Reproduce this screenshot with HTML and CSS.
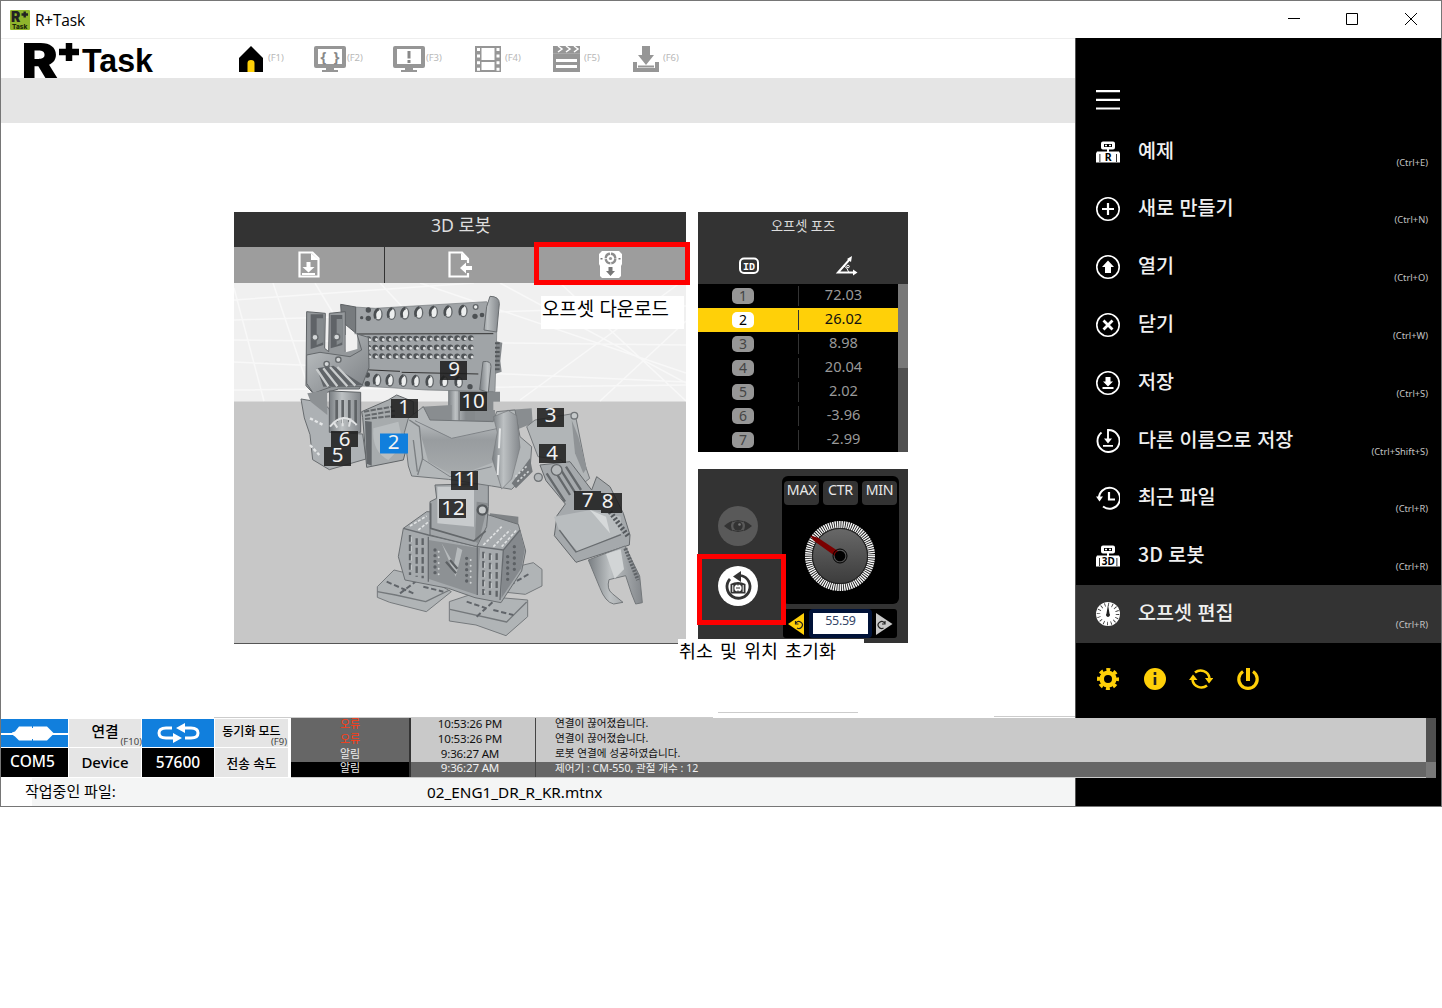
FILE: index.html
```html
<!DOCTYPE html>
<html lang="ko">
<head>
<meta charset="utf-8">
<title>R+Task</title>
<link rel="stylesheet" href="styles.css">
</head>
<body>
<div class="window">
  <header class="titlebar">
    <svg class="app-icon" viewBox="0 0 20 20"><rect width="20" height="20" rx="1" fill="#8fb52c"/><text x="1" y="11.500" font-size="14" font-weight="900" fill="#222">R</text><path d="M11.500 4.500h6.500M14.700 1.500v6" stroke="#222" stroke-width="2.400"/><text x="2" y="18.500" font-size="6.500" font-weight="800" fill="#1d2a08">Task</text></svg>
    <span class="title">R+Task</span>
    <svg class="controls" viewBox="0 0 130 14"><path d="M0 5.500h12" /><path d="M58.500 .5h11v11h-11z"/><path d="M117 0l12 12M129 0l-12 12"/></svg>
  </header>

  <div class="body">
    <main class="main">
      <nav class="toolbar">
        <svg class="logo" viewBox="0 0 130 40"><text x="-3" y="39.500" font-size="48" font-weight="900" textLength="37" lengthAdjust="spacingAndGlyphs">R</text><path d="M35 14h20M45 5v18" stroke="#000" stroke-width="6.500"/><text class="logo-word" x="58" y="33.500" textLength="71" lengthAdjust="spacingAndGlyphs">Task</text></svg>
        <div class="tool"><svg viewBox="0 0 34 28"><path fill="#000" d="M5 27V13L17 1l12 12v14z"/><path fill="#ffd008" d="M13.500 27V18q0-3 3.500-3t3.500 3v9z"/></svg><span>(F1)</span></div>
        <div class="tool"><svg viewBox="-1 0 34 28"><path fill="#969696" fill-rule="evenodd" d="M2 1h28q2 0 2 2v18q0 2-2 2H20v2h4v2H8v-2h4v-2H2q-2 0-2-2V3q0-2 2-2zM4 4v15h24V4z"/><text class="glyph" x="16" y="17" font-size="15" textLength="19">{ }</text></svg><span>(F2)</span></div>
        <div class="tool"><svg viewBox="-1 0 34 28"><path fill="#969696" fill-rule="evenodd" d="M2 1h28q2 0 2 2v18q0 2-2 2H20v2h4v2H8v-2h4v-2H2q-2 0-2-2V3q0-2 2-2zM4 4v15h24V4z"/><path d="M16 6v7.500M16 15v3" stroke="#888" stroke-width="3"/></svg><span>(F3)</span></div>
        <div class="tool"><svg viewBox="0 0 34 28"><path fill="#969696" d="M4 1h26v26H4z"/><path fill="#fff" d="M10.500 3h13v12h-13zM10.500 17h13v8h-13z"/><path d="M7.500 3v23M27 3v23" stroke="#fff" stroke-width="3" stroke-dasharray="3 3.600"/></svg><span>(F4)</span></div>
        <div class="tool"><svg viewBox="0 0 34 28"><path fill="#969696" d="M3 1h27v26H3z"/><path d="M8 1l4 3-4 3M16 1l4 3-4 3M24 1l4 3-4 3" fill="none" stroke="#fff" stroke-width="1.500"/><path d="M3 8.500h27" stroke="#b4b4b4" stroke-width=".6"/><path d="M6 15.500h21M6 21.500h21" stroke="#fff" stroke-width="3"/></svg><span>(F5)</span></div>
        <div class="tool"><svg viewBox="0 0 34 28"><path fill="#969696" d="M13 1h8v9h4l-8 10-8-10h4z"/><path fill="none" stroke="#969696" stroke-width="4" d="M6 17v8h22v-8"/><path d="M9 21.500h16" stroke="#969696" stroke-width="2"/></svg><span>(F6)</span></div>
      </nav>
      <div class="band"></div>

      <div class="workspace">
        <section class="robot-panel">
          <h2 class="panel-title">3D 로봇</h2>
          <div class="tabs">
            <div class="tab"><svg viewBox="0 0 24 28"><path d="M2.500 1.500h13l6 6v18h-19z" fill="none" stroke="#fff" stroke-width="2.200"/><path fill="#fff" d="M9.500 11h4v5h4l-6 5.500-6-5.500h4zM5 22h13v2H5zM14 2v7h8z"/></svg></div>
            <div class="tab"><svg viewBox="0 0 24 28"><path d="M20 12V8l-6-6.500H1.500v24H20V22" fill="none" stroke="#fff" stroke-width="2.200"/><path fill="#fff" d="M13 2v7h8zM12 17l6-5.500V15h7v4h-7v3.500z"/></svg></div>
            <div class="tab"><svg viewBox="0 0 24 28"><path fill="#fff" d="M3 0h17l3 3v10l-1 2v10l-2 2H3l-2-2V15l-1-2V3z"/><circle cx="11.500" cy="7.500" r="4.800" fill="none" stroke="#8d8d8d" stroke-width="2.400" stroke-dasharray="6.500 1"/><circle cx="11.500" cy="7.500" r="1.600" fill="#999"/><path fill="#777" d="M9.500 16h4v4H16l-4.500 5L7 20h2.500zM1.500 7h2v1.500h-2zM19.500 7h2v1.500h-2z"/></svg></div>
          </div>
          <svg class="scene" viewBox="234 283 452 360">
            <defs>
              <linearGradient id="metal" x1="0" y1="0" x2="1" y2="1"><stop offset="0" stop-color="#c0c4c6"/><stop offset=".5" stop-color="#9da1a4"/><stop offset="1" stop-color="#7d8185"/></linearGradient>
              <linearGradient id="chest" x1="0" y1="0" x2="0" y2="1"><stop offset="0" stop-color="#bcc0c2"/><stop offset=".35" stop-color="#989c9f"/><stop offset="1" stop-color="#a8acae"/></linearGradient>
              <linearGradient id="side" x1="0" y1="0" x2="1" y2="0"><stop offset="0" stop-color="#797e82"/><stop offset=".4" stop-color="#bdc1c3"/><stop offset="1" stop-color="#84888c"/></linearGradient>
            </defs>
            <path fill="#f0f0f0" d="M234 283h452v119H234z"/>
            <path fill="#c7c7c7" d="M234 401.500h452V643H234z"/>
            <path d="M273 283l40 118M234 288l30 113M315 283l18 30M234 300l240-17M234 320l452-14M234 340l452 5M234 362l452 20M234 390l452-5M420 283l266 90M500 283l186 100M560 283l126 118M380 283l110 118M520 400l160-117M600 401l86-80" stroke="#f8f8f8" stroke-width="1.500" fill="none"/>

            <g transform="translate(290 285) scale(.33333)" stroke-linejoin="round">
              <path fill="#85898c" d="M605 165l32 8-6 55 4 32-30 10zM590 320h40v30h-40zM475 310h135v100H440l10-30h25z"/>
              <path fill="url(#side)" d="M475 315h30v95h-30zM510 320h18v85h-18z"/>
              <path fill="#a0a4a7" stroke="#74787b" stroke-width="2" d="M195 66l60 4 335-20 30 42v58l-5 170-205-5-195-12-20-60V150z"/>
              <path fill="#777b7e" stroke="#5d6164" stroke-width="3" d="M152 58l45 8v78l-42-35z"/>
              <path fill="url(#side)" stroke="#686c6f" stroke-width="3" d="M600 34q28 0 28 22l-8 85-38-6 8-70zM579 230q24-4 24 14l-8 78-26-8z"/>
              <path d="M205 147l405-1M220 254l110 5M335 262l230 5" stroke="#333" stroke-width="3"/>
              <g fill="#eceeee" stroke="#63676a" stroke-width="4">
                <ellipse cx="265" cy="88" rx="11" ry="17"/><ellipse cx="305" cy="86" rx="11" ry="17"/><ellipse cx="345" cy="85" rx="11" ry="17"/><ellipse cx="387" cy="83" rx="11" ry="17"/><ellipse cx="431" cy="81" rx="11" ry="17"/><ellipse cx="475" cy="80" rx="11" ry="17"/><ellipse cx="520" cy="78" rx="11" ry="17"/><circle cx="557" cy="66" r="7"/>
                <ellipse cx="262" cy="285" rx="10" ry="17"/><ellipse cx="300" cy="286" rx="10" ry="17"/><ellipse cx="340" cy="287" rx="10" ry="17"/><ellipse cx="378" cy="288" rx="10" ry="17"/><ellipse cx="420" cy="289" rx="10" ry="17"/><ellipse cx="463" cy="290" rx="10" ry="15"/><ellipse cx="507" cy="292" rx="10" ry="15"/>
              </g>
              <path d="M256 100q-6-20 10-28M296 98q-6-20 10-28M336 97q-6-20 10-28M378 95q-6-20 10-28M422 93q-6-20 10-28M466 92q-6-20 10-28M511 90q-6-20 10-28M254 297q-6-20 8-28M292 298q-6-20 8-28M332 299q-6-20 8-28M370 300q-6-20 8-28M412 301q-6-20 8-28M455 302q-6-20 8-28M499 302q-6-20 8-28" stroke="#4a4e51" stroke-width="8" fill="none"/>
              <g fill="#4d5154"><circle cx="235" cy="75" r="8"/><circle cx="235" cy="100" r="8"/><circle cx="215" cy="98" r="5"/><circle cx="555" cy="94" r="8"/><circle cx="576" cy="90" r="7"/><circle cx="232" cy="270" r="8"/><circle cx="232" cy="296" r="8"/><circle cx="540" cy="305" r="8"/></g>
              <path d="M235 162l320-3M235 188l320-1M235 213l320 1" stroke="#505457" stroke-width="17" stroke-linecap="round" stroke-dasharray="0 20.500"/>
              <path d="M239 164l320-3M239 190l320-1M239 215l320 1" stroke="#dddfe0" stroke-width="9" stroke-linecap="round" stroke-dasharray="0 20.500"/>
              <path d="M622 172v90" stroke="#55595c" stroke-width="14" stroke-dasharray="6 7"/>
              <!-- raised claw arm -->
              <path fill="#94989b" stroke="#5e6265" stroke-width="3" d="M50 80l56 5-2 105 12 10 2-115 48-5v120l35-55 22 10 13 95-28 62-62 0-70 20-28-30z"/>
              <path fill="#5f6367" d="M62 88h38v92l-38 12zM122 90h35v90l-35 10z"/>
              <path fill="#858a8d" d="M80 100h20v72l-20 8zM140 102h17v70l-17 8z"/>
              <path fill="#f0f0f0" d="M167 150l35-3v45l-35 10z"/>
              <path fill="url(#metal)" stroke="#63676a" stroke-width="3" d="M50 210l40-8 90 13 35-20-14-48 34 10 2 90-22 58h-90l-55 20-20-30z"/>
              <path fill="#606468" d="M80 250l50-8 90 58-120 5z"/>
              <path d="M80 252l35 52M100 250l42 54M120 246l52 58M142 246l54 56" stroke="#c9cccd" stroke-width="7"/>
              <path fill="#adb1b4" stroke="#686c6f" stroke-width="3" d="M33 342l30 5 5-25 50 50 5 70 95 5 10 75-110 32-50-30-8-75-17-50z"/>
              <path fill="#8d9194" d="M52 325l60-10v75l-50-40z"/>
              <path fill="url(#side)" stroke="#5e6265" stroke-width="3" d="M118 318l94 4v120H118z"/>
              <path d="M140 345v65M158 345v70M178 345v65M197 345v75" stroke="#5f6366" stroke-width="8"/>
              <path d="M120 425q40-50 80-5M130 410l12 18M158 402v22M182 400l-5 25" stroke="#e0e2e3" stroke-width="6" fill="none"/>
              <path d="M60 480l28 30M60 400l40 20" stroke="#e4e6e7" stroke-width="7" stroke-dasharray="10 6"/>
              <g fill="#d4d7d8" stroke="#65696c" stroke-width="4"><circle cx="75" cy="157" r="9"/><circle cx="140" cy="156" r="9"/><circle cx="110" cy="237" r="8"/><circle cx="145" cy="224" r="8"/></g>
              <path fill="#a7abad" stroke="#606467" stroke-width="3" d="M215 380l80-35 25-15 50 20v60l-30 115-110 22-12-150z"/>
              <path fill="#63676b" d="M225 408l20 2v132l-15-6z"/>
              <path d="M222 380l85-15M225 392l90-15M225 402l90-10" stroke="#65696c" stroke-width="6" stroke-dasharray="16 4"/>
              <path fill="#b9bdbf" d="M250 430l75-20 15 70-45 45q-50-25-45-95z"/>
            </g>

            <g transform="translate(360 390) scale(.33333)" stroke-linejoin="round">
              <path fill="#b0b4b6" stroke="#75797c" stroke-width="3" d="M470 530l50-12 26 20v50l-50 25-76-8z"/>
              <path fill="#b0b4b6" stroke="#75797c" stroke-width="3" d="M52 590l50-50 100 25 72 40-75 60-110-28-37-15zM268 635l60-20 175 15v50l-65 57-90-32-80-12z"/>
              <path d="M52 605l55 10 90 20 72-35M270 658l170 38 60-60" stroke="#74787b" stroke-width="4" fill="none"/>
              <path d="M80 575l80 35M120 610l60-45M190 590l60 15M320 635l60 20M350 680l55-50M400 660l60 15M450 585l60-35" stroke="#61656a" stroke-width="6" stroke-dasharray="16 8"/>
              <!-- pelvis -->
              <path fill="#7f8386" d="M390 370l85 10v40l-90-10z"/>
              <path fill="#a6aaad" stroke="#6b6f72" stroke-width="3" d="M130 415l70-50 180 8 95 30 22 80-12 60-62 95-78-15-80-28-130-25-20-70z"/>
              <path fill="#8d9194" d="M205 450l155 25-8 140-145-48z"/>
              <path fill="#85898d" d="M430 480l50-60 14 60-10 55-60 90z"/>
              <path d="M205 440v135M352 470v145M130 415l75 20 150 35 75 10 50-60M430 480l-10 150" stroke="#686c70" stroke-width="4" fill="none"/>
              <path d="M150 435v120M170 445v115M188 445v120M370 485v130M390 490v125M410 490v130" stroke="#5f6367" stroke-width="7" stroke-dasharray="20 8"/>
              <path d="M154 440v110M374 490v120M394 495v110" stroke="#ccd0d1" stroke-width="3" stroke-dasharray="16 12"/>
              <path d="M225 480v85M320 505v85M443 500v80M463 470v85" stroke="#5d6165" stroke-width="10" stroke-linecap="round" stroke-dasharray="0 17"/>
              <path d="M236 485v80M332 510v75" stroke="#d0d3d4" stroke-width="6" stroke-linecap="round" stroke-dasharray="0 17"/>
              <path fill="#b6babc" d="M245 460l42 100 20-80-15-8-10 50z"/>
              <path d="M258 515l30 35M270 510l22 26" stroke="#5d6164" stroke-width="7"/>
              <path d="M150 408l50-30M175 420l35-28M370 465l55-55M400 470l50-50M425 470l45-50" stroke="#e0e2e3" stroke-width="5" stroke-dasharray="9 5"/>
              <path fill="#a2a6a9" stroke="#686c6f" stroke-width="3" d="M210 335l20-10-5-40 160-5v70l-5 60-30 60-140-35z"/>
              <path fill="#c8cbcd" d="M232 290h110v120l-110-10z"/>
              <path fill="#888c8f" d="M350 335l35 5-30 120-10-5z"/>
              <circle cx="367" cy="360" r="14" fill="#c8cbcc" stroke="#55595c" stroke-width="7"/>
              <path d="M212 340v75l130 38 35-30" stroke="#63676a" stroke-width="5" fill="none"/>
              <!-- chest -->
              <path fill="#898d90" d="M185 50l90-5v50h-80zM440 60l75-5 3 45-50 20zM345 60h60v30h-60z"/>
              <path fill="#b3b7b9" stroke="#707477" stroke-width="3" d="M145 85l45-35 20 40 190 5 10-30 55-5 15 80 35 30-5 70-55 58-60-10-130-20-110-10-10-30-12-100z"/>
              <path fill="url(#chest)" d="M170 90l105 55 150-30-20 100-120 45-80-45z"/>
              <path d="M165 92l110 53 140-30M185 205l85 55 125-30" stroke="#808488" stroke-width="3" fill="none"/>
              <path d="M148 90l30 20 10 95-15 50M160 150l12 95" stroke="#7b7f82" stroke-width="4" fill="none"/>
              <path fill="url(#side)" stroke="#76797c" stroke-width="2" d="M400 80l45-18 25 15 10 95-25 95-30 30-28-90 15-80z"/>
              <path d="M420 115l-8 160" stroke="#e5e7e8" stroke-width="6" stroke-dasharray="60 20"/>
              <path fill="#74787b" d="M455 280l55-75 8 40-50 50z"/>
              <path d="M466 260l38-35M472 275l36-33" stroke="#d0d3d4" stroke-width="5" stroke-dasharray="7 6"/>
              <!-- extended arm -->
              <path fill="#b1b5b7" stroke="#74787b" stroke-width="3" d="M500 110l25-20 120-20 10 50 22 110 12 35-25 20-60-75-70-10z"/>
              <path fill="#8f9396" d="M635 90l20 50 25 95-10 15-25-60z"/>
              <path fill="#a5a9ac" stroke="#64686b" stroke-width="3" d="M540 225l90-10 65 85 15-40 40 30 40 80 20 65-2 30-160 52-65-80 8-60 25-35-58-70z"/>
              <path d="M560 250l55 85M580 235l50 80M600 235l45 72M618 230l45 70" stroke="#64686b" stroke-width="7"/>
              <path fill="#b9bdbf" d="M582 380l110-20 90 20 2 50-130 55-55-60z"/>
              <path fill="#d6d9da" d="M690 360l60 70-12-50z"/>
              <path d="M598 420l50 66 135-52" stroke="#686c6f" stroke-width="4" fill="none"/>
              <path d="M750 365l55 75" stroke="#55595d" stroke-width="15" stroke-dasharray="6 6"/>
              <circle cx="590" cy="240" r="16" fill="#b5b9bb" stroke="#64686b" stroke-width="4"/><circle cx="643" cy="77" r="10" fill="#c6cacb" stroke="#707477" stroke-width="4"/><circle cx="535" cy="262" r="12" fill="#b3b7b9" stroke="#707477" stroke-width="4"/>
              <path fill="url(#side)" stroke="#73777a" stroke-width="3" d="M685 510l110-42 44 90 8 80-20 4-12-30-18-55-50 12q-8 28 10 42l32 26-28 5q-25-5-42-50z"/>
              <path fill="#d2d5d6" d="M738 492l44-14 10 60-28 28z"/>
              <path d="M796 475l38 95" stroke="#606468" stroke-width="12" stroke-dasharray="6 4"/>
            </g>

            <g class="joint-box"><path d="M391 399h27v19h-27zM537 408h27v19h-27zM539 444h27v19h-27zM324 447h27v19h-27zM331 431h27v16h-27zM574 491h27v19h-27zM601 493h21v20h-21zM440 361h27v19h-27zM460 392h27v19h-27zM451 471h27v19h-27zM439 499h27v19h-27z"/><path class="selected" d="M380 433.500h28v20h-28z"/></g>
            <g class="joint-id"><text x="404" y="414">1</text><text x="393.500" y="449">2</text><text x="550.500" y="422">3</text><text x="552" y="460">4</text><text x="337.500" y="462">5</text><text x="344.500" y="446">6</text><text x="587.500" y="507">7</text><text x="607.500" y="508">8</text><text x="454" y="376">9</text><text x="473" y="408">10</text><text x="465" y="486">11</text><text x="453" y="515">12</text></g>
          </svg>
        </section>

        <aside class="right-column">
          <section class="pose">
            <div class="pose-head">
              <h3>오프셋 포즈</h3>
              <svg viewBox="0 0 210 20"><rect x="42" y="2.500" width="18" height="14.500" rx="4" fill="none" stroke="#fff" stroke-width="2"/><text x="51" y="13.500" text-anchor="middle" font-size="10" font-weight="700" font-family="Liberation Mono" fill="#fff">ID</text><g fill="none" stroke="#fff" stroke-width="2"><path d="M152 3L140 16.500h17"/><path d="M145 9q5 3 6 8" stroke-width="1"/><circle cx="150" cy="10.500" r="1.300" stroke-width="1"/></g><path fill="#fff" d="M149 3l5-3-1 6zM155 13.500l4.500 3-4.500 3z"/></svg>
            </div>
            <div class="pose-body">
              <ul class="pose-rows">
                <li><b>1</b><i></i><span>72.03</span></li>
                <li class="active"><b>2</b><i></i><span>26.02</span></li>
                <li><b>3</b><i></i><span>8.98</span></li>
                <li><b>4</b><i></i><span>20.04</span></li>
                <li><b>5</b><i></i><span>2.02</span></li>
                <li><b>6</b><i></i><span>-3.96</span></li>
                <li><b>7</b><i></i><span>-2.99</span></li>
              </ul>
              <div class="pose-scroll"><div></div></div>
            </div>
          </section>

          <section class="dial-panel">
            <div class="round-buttons">
              <svg viewBox="0 0 40 40"><circle cx="20" cy="20" r="20" fill="#595959"/><path fill="#333" d="M6 20q6-5 9-5-4 5 0 10-3 0-9-5zM34 20q-6-5-9-5 4 5 0 10 3 0 9-5z"/><circle cx="20" cy="20" r="4.700" fill="#333"/><circle cx="21.500" cy="18.500" r="1.300" fill="#777"/><path d="M15 15.500q5-2 10 0M15 24.500q5 2 10 0" stroke="#333" fill="none"/></svg>
              <svg viewBox="0 0 40 40"><circle cx="20" cy="20" r="20" fill="#fff"/><path d="M12 13A11.500 11.500 0 1 0 23 9.500" fill="none" stroke="#333" stroke-width="2.800"/><path fill="#333" d="M15 10.500l8-5.500v11z"/><path fill="#333" d="M12.500 18q7.500-4 15 0v9.500h-15z"/><circle cx="20" cy="22" r="3.600" fill="#fff"/><path d="M18 22h4M20 18v1.500M20 24.500V26" stroke="#333" stroke-width="1.200"/><path d="M14.800 19v7M25.200 19v7" stroke="#fff"/></svg>
            </div>
            <div class="dial-side">
              <div class="dial-box">
                <div class="limits"><span>MAX</span><span>CTR</span><span>MIN</span></div>
                <svg class="dial" viewBox="-38 -38 76 76"><defs><linearGradient id="disc" x1="0" y1="0" x2="0" y2="1"><stop offset="0" stop-color="#686868"/><stop offset="1" stop-color="#3c3c3c"/></linearGradient></defs><circle r="31.500" fill="none" stroke="#f4f4f4" stroke-width="7" stroke-dasharray="1.450 .749"/><circle r="27.500" fill="url(#disc)" stroke="#222"/><path fill="#7b0000" d="M-30-20.500l7.500 2L-2-5-5 0l-21-15z"/><circle r="7" fill="none" stroke="#000" stroke-width="1"/><circle r="5.300" fill="#000"/></svg>
              </div>
              <div class="stepper">
                <svg viewBox="0 0 17 22"><path fill="#ffd008" d="M0 11L16 0v22z"/><path d="M8 10a3.500 3.500 0 1 1 1 5M7.500 8v3h3" fill="none" stroke="#222" stroke-width="1.200"/></svg>
                <span>55.59</span>
                <svg viewBox="0 0 17 22"><path fill="#c9c9c9" d="M16.500 11L0 0v22z"/><path d="M8.500 10a3.500 3.500 0 1 0-1 5M9 8v3H6" fill="none" stroke="#222" stroke-width="1.200"/></svg>
              </div>
            </div>
          </section>
        </aside>
        <div class="note note-download">오프셋 다운로드</div>
        <div class="note note-reset">취소 및 위치 초기화</div>
        <div class="mark mark-download"></div>
        <div class="mark mark-reset"></div>
      </div>
      <div class="rule rule-a"></div><div class="rule rule-b"></div><div class="rule rule-c"></div>
    </main>

    <aside class="menu">
      <svg class="burger" viewBox="0 0 24 20"><path d="M0 1.200h24M0 9.800h24M0 18.500h24" stroke="#fff" stroke-width="2.200"/></svg>
      <ul>
        <li><svg viewBox="0 0 24 24"><path class="solid" fill-rule="evenodd" d="M7 1.500h10q2 0 2 2v4q0 2-2 2h-4v2h10l1 2v9H0v-9l1-2h10v-2H7q-2 0-2-2v-4q0-2 2-2zM8 4v3h8V4zM3.500 14v8h.8v-8zM20 14v8h.8v-8z"/><path class="solid" d="M9 4.800h2v1.500H9zM13 4.800h2v1.500h-2z"/><text x="12.200" y="21.300" class="badge" font-size="10.500">R</text></svg><span>예제</span><em>(Ctrl+E)</em></li>
        <li><svg viewBox="0 0 24 24"><circle cx="12" cy="12" r="11.200"/><path d="M12 6v12M6 12h12" stroke-width="2.200"/></svg><span>새로 만들기</span><em>(Ctrl+N)</em></li>
        <li><svg viewBox="0 0 24 24"><circle cx="12" cy="12" r="11.200"/><path class="solid" d="M12 5.500l6 6.500h-3v6H9v-6H6z"/></svg><span>열기</span><em>(Ctrl+O)</em></li>
        <li><svg viewBox="0 0 24 24"><circle cx="12" cy="12" r="11.200"/><path d="M7.500 7.500l9 9M16.500 7.500l-9 9" stroke-width="2.800"/></svg><span>닫기</span><em>(Ctrl+W)</em></li>
        <li><svg viewBox="0 0 24 24"><circle cx="12" cy="12" r="11.200"/><path class="solid" d="M9.500 6h5v4.500H17L12 15.500l-5-5h2.500zM6.500 16h11v2h-11z"/></svg><span>저장</span><em>(Ctrl+S)</em></li>
        <li><svg viewBox="0 0 24 24"><path d="M5.500 3.500A11 11 0 1 0 12 1v10" stroke-width="1.900"/><path class="solid" d="M8 9.500h8l-4 5zM7 16h10v1.800H7z"/></svg><span>다른 이름으로 저장</span><em>(Ctrl+Shift+S)</em></li>
        <li><svg viewBox="0 0 24 24"><path d="M3 13A10.500 10.500 0 1 1 7 20.500" stroke-width="2"/><path d="M13 6v7.500h6" stroke-width="2.200"/><path class="solid" d="M0 10.500h7L3.500 15.500z"/></svg><span>최근 파일</span><em>(Ctrl+R)</em></li>
        <li><svg viewBox="0 0 24 24"><path class="solid" fill-rule="evenodd" d="M7 1.500h10q2 0 2 2v4q0 2-2 2h-4v2h10l1 2v9H0v-9l1-2h10v-2H7q-2 0-2-2v-4q0-2 2-2zM8 4v3h8V4zM3 14v8h.8v-8zM20.500 14v8h.8v-8z"/><path class="solid" d="M9 4.800h2v1.500H9zM13 4.800h2v1.500h-2z"/><text x="12.200" y="21" class="badge" font-size="10">3D</text></svg><span>3D 로봇</span><em>(Ctrl+R)</em></li>
        <li class="active"><svg viewBox="0 0 24 24"><circle class="solid" cx="12" cy="12" r="12"/><circle cx="12" cy="12" r="9.500" stroke="#333" stroke-width="3.500" stroke-dasharray=".8 2.930"/><path d="M12 2.500l1.500 9a2 2 0 1 1-3 0z" fill="#222" stroke="none"/></svg><span>오프셋 편집</span><em>(Ctrl+R)</em></li>
      </ul>
      <div class="quick">
        <svg viewBox="0 0 24 24"><circle cx="12" cy="12" r="6.300" fill="none" stroke="#ffd008" stroke-width="4.600"/><circle cx="12" cy="12" r="9.500" fill="none" stroke="#ffd008" stroke-width="3" stroke-dasharray="4 3.461" stroke-dashoffset="2"/></svg>
        <svg viewBox="0 0 24 24"><circle cx="12" cy="12" r="11" fill="#ffd008"/><path d="M12 5v3M12 10v8" stroke="#222" stroke-width="2.600"/></svg>
        <svg viewBox="0 0 24 24"><path d="M6 5.500A9 9 0 0 1 20.500 11M18 18.500A9 9 0 0 1 3.500 13" fill="none" stroke="#ffd008" stroke-width="2.600"/><path fill="#ffd008" d="M16 11h8.500L20 16.500zM0 13h8.500L4 7.500z"/></svg>
        <svg viewBox="0 0 24 24"><path d="M7 4.500a9.200 9.200 0 1 0 10 0" fill="none" stroke="#ffd008" stroke-width="3.200"/><path d="M12 1v13" stroke="#ffd008" stroke-width="4"/></svg>
      </div>
    </aside>
  </div>

  <div class="status">
    <div class="cells">
      <div class="cell blue"><svg viewBox="0 0 67 28"><path d="M0 15h14M50 15h17" stroke="#fff" stroke-width="2"/><path fill="#fff" d="M11 13.500l3-1 4-5h13v14H18l-4-4-3-2zM32 7.500h14l4 4 3 3-3 3-4 4H32z"/><path fill="#fff" d="M30 9h3v11h-3z"/></svg></div>
      <div class="cell grey big">연결<small>(F10)</small></div>
      <div class="cell blue"><svg viewBox="0 0 72 28"><path d="M31 19h-7q-7 0-7-5t7-5h6M40 9h9q7 0 7 5t-7 5h-6" fill="none" stroke="#fff" stroke-width="3"/><path fill="#fff" d="M43 4v10L34 9zM31 14v10l9-5z"/></svg></div>
      <div class="cell grey sync">동기화 모드<small>(F9)</small></div>
      <div class="cell black com">COM5</div>
      <div class="cell grey device">Device</div>
      <div class="cell black">57600</div>
      <div class="cell grey speed">전송 속도</div>
    </div>
    <div class="log">
      <div class="entry error"><b>오류</b><span>10:53:26 PM</span><p>연결이 끊어졌습니다.</p></div>
      <div class="entry error"><b>오류</b><span>10:53:26 PM</span><p>연결이 끊어졌습니다.</p></div>
      <div class="entry"><b>알림</b><span>9:36:27 AM</span><p>로봇 연결에 성공하였습니다.</p></div>
      <div class="entry chosen"><b>알림</b><span>9:36:27 AM</span><p class="wide">제어기 : CM-550, 관절 개수 : 12</p></div>
    </div>
    <div class="log-scroll"><div></div></div>
  </div>

  <footer class="footer">
    <div class="file"><span class="file-label">작업중인 파일:</span><span class="file-name">02_ENG1_DR_R_KR.mtnx</span></div>
    <div class="footer-end"></div>
  </footer>
</div>
</body>
</html>
```
FILE: styles.css
```css
* { box-sizing: border-box; margin: 0; padding: 0; }
body { background: #fff; font-family: "Noto Sans", "Noto Sans CJK KR", sans-serif; color: #000; }
ul { list-style: none; }
svg { display: block; flex: none; }
b, i, em, h2, h3 { font-weight: 400; font-style: normal; }

.window { width: 1442px; height: 807px; border: 1px solid #767676; display: flex; flex-direction: column; }
.titlebar { height: 37px; display: flex; align-items: center; padding-left: 9px; }
.app-icon { width: 20px; height: 20px; font-family: Inter, sans-serif; }
.title { margin-left: 5px; font: 15.500px/20px "Open Sans", sans-serif; letter-spacing: -.2px; flex: 1; }
.controls { width: 130px; height: 14px; margin-right: 23px; fill: none; stroke: #000; stroke-width: 1; }

.body { display: flex; height: 680px; }
.main { width: 1074px; position: relative; flex: none; }
.toolbar { height: 40px; display: flex; border-top: 1px solid #eee; }
.logo { width: 130px; height: 40px; margin: -1px 80px 0 23px; overflow: hidden; font-family: Inter, sans-serif; }
.logo-word { font: 700 33px "Liberation Sans", sans-serif; }
.tool { width: 79px; display: flex; padding-top: 6px; }
.tool svg { width: 34px; height: 28px; }
.tool svg .glyph { text-anchor: middle; fill: #888; font-weight: 700; }
.tool span { font-size: 9.500px; line-height: 26px; color: #b8b8b8; letter-spacing: -.1px; }
.band { height: 45px; background: #e5e5e5; }

.workspace { position: relative; display: flex; gap: 12px; padding: 89px 0 0 233px; }
.robot-panel { width: 452px; height: 432px; border-bottom: 1px solid #555; }
.panel-title { height: 35px; background: #333; color: #ddd; font-size: 17.700px; line-height: 26px; text-align: center; padding-left: 2px; }
.tabs { height: 36px; display: flex; gap: 1px; background: #333; }
.tab { flex: 1; background: #9d9d9d; display: flex; align-items: center; justify-content: center; }
.tab svg { width: 24px; height: 28px; }
.scene { width: 452px; height: 360px; }
.joint-box { fill: rgba(30, 30, 30, .87); }
.joint-box .selected { fill: #117fdd; }
.joint-id { fill: #f2f2f2; font-size: 20.500px; text-anchor: middle; }

.right-column { width: 210px; display: flex; flex-direction: column; gap: 17px; }
.pose-head { height: 72px; background: #333; color: #ddd; }
.pose-head h3 { height: 44px; font-size: 13.200px; line-height: 28px; text-align: center; }
.pose-head svg { width: 210px; height: 20px; }
.pose-body { display: flex; height: 168px; background: #000; }
.pose-rows { width: 200px; }
.pose-rows li { height: 24px; display: grid; grid-template-columns: 100px 1px 89px; color: #999; }
.pose-rows b { width: 22px; height: 16px; margin: 4px 0 0 34px; background: #969696; border-radius: 5px; color: #444; font-size: 14px; line-height: 15px; text-align: center; }
.pose-rows i { background: #333; margin: 2px 0; }
.pose-rows span { font-size: 14.600px; line-height: 20px; text-align: center; }
.pose-rows .active { background: #ffd008; color: #111; }
.pose-rows .active b { background: #fff; color: #000; }
.pose-scroll { width: 10px; background: #505050; }
.pose-scroll div { height: 84px; background: #787878; }

.dial-panel { height: 174px; background: #333; display: flex; }
.round-buttons { width: 84px; padding: 37px 0 0 20px; display: flex; flex-direction: column; gap: 20px; }
.round-buttons svg { width: 40px; height: 40px; }
.dial-side { width: 117px; padding-top: 7px; }
.dial-box { height: 128px; background: #000; border-radius: 6px; padding: 5px 2px; }
.limits { display: flex; gap: 4px; height: 24px; }
.limits span { flex: 1; background: #333; border-radius: 4px; color: #e8e8e8; font-size: 14.200px; line-height: 18px; display: flex; justify-content: center; letter-spacing: -.3px; }
.dial { width: 76px; height: 76px; margin: 13px 0 0 18px; }
.stepper { margin: 5px 2px 0 1px; height: 29px; background: #000; border-radius: 3px; display: flex; align-items: center; justify-content: space-between; padding: 0 4px 0 5px; }
.stepper svg { width: 17px; height: 22px; }
.stepper span { width: 63px; height: 29px; background: #fff; border: 4px solid #001238; border-radius: 4px; color: #334466; font-size: 12.500px; line-height: 16px; text-align: center; letter-spacing: -.3px; }

.note { position: absolute; background: #fff; font-family: "Noto Sans CJK KR", sans-serif; white-space: nowrap; font-size: 18.900px; line-height: 23px; }
.note-download { left: 540px; top: 173px; width: 143px; height: 33px; padding-left: 1px; }
.note-reset { left: 677px; top: 516px; width: 186px; height: 24px; padding-left: 1px; line-height: 22px; font-size: 18.400px; word-spacing: 2px; }
.mark { position: absolute; border: 5px solid #f00; }
.mark-download { left: 533px; top: 119px; width: 156px; height: 43px; }
.mark-reset { left: 696px; top: 431px; width: 89px; height: 71px; }
.rule { position: absolute; height: 1px; background: #ccc; }
.rule-a { left: 717px; top: 674px; width: 140px; }
.rule-b { left: 993px; top: 678px; width: 81px; }
.rule-c { left: 213px; top: 679px; width: 499px; }

.menu { flex: 1; background: #000; border-left: 1px solid #555; padding: 52px 0 0 20px; color: #f0f0f0; }
.burger { width: 24px; height: 20px; }
.menu ul { margin: 12.600px 0 0 -20px; }
.menu li { height: 57.800px; padding: 0 13px 0 20px; display: flex; }
.menu li.active { background: #333; }
.menu li svg { width: 24px; height: 24px; margin-top: 17px; fill: none; stroke: #fff; stroke-width: 1.600; }
.menu li svg .solid { fill: #fff; stroke: none; }
.menu li svg .badge { fill: #000; stroke: none; font-weight: 700; text-anchor: middle; }
.menu li span { flex: 1; margin-left: 18px; font-family: "Noto Sans CJK KR", sans-serif; font-size: 19.600px; font-weight: 500; line-height: 53px; }
.menu li em { font-size: 9.300px; line-height: 79px; color: #c4c4c4; }
.quick { display: flex; gap: 22.700px; margin-top: 24px; }
.quick svg { width: 24px; height: 24px; }

.status { height: 60px; display: flex; background: #000; }
.cells { width: 290px; flex: none; background: #fff; display: grid; grid-template-columns: 67px 72px 72px 73px; grid-template-rows: 28px 29px; gap: 1px; padding-top: 1px; }
.cell { position: relative; display: flex; align-items: center; justify-content: center; font-size: 15.500px; font-weight: 500; line-height: 20px; white-space: nowrap; }
.cell svg { width: 100%; height: 28px; }
.blue { background: #117fdd; }
.grey { background: #e5e5e5; }
.black { background: #000; color: #fff; padding-bottom: 1px; }
.big { padding-bottom: 4px; font-size: 14.800px; }
.cell small { position: absolute; right: -1px; bottom: -1px; font-size: 9.500px; line-height: 12px; font-weight: 400; color: #444; }
.sync { font-size: 12px; padding-bottom: 3px; }
.sync small { right: 1px; }
.com { padding: 0 4px 4px 0; }
.device { font-size: 15px; padding-bottom: 1px; }
.speed { font-size: 12.700px; }
.log { width: 1135px; height: 60px; padding-bottom: 1px; overflow: hidden; background: #c9c9c9; display: flex; flex-direction: column; justify-content: flex-end; }
.entry { flex: none; height: 15px; display: grid; grid-template-columns: 120px 125px 1fr; font-size: 11px; line-height: 13px; white-space: nowrap; color: #111; }
.entry b { background: #666; color: #eee; text-align: center; border-right: 2px solid #333; }
.entry span { text-align: center; font-size: 11.600px; letter-spacing: -.2px; padding-right: 6px; border-right: 1px solid #444; }
.entry p { padding-left: 19px; font-size: 10.600px; }
.chosen b, .chosen span, .chosen p { line-height: 12px; }
.error b { color: #ff3c14; }
.chosen { background: #666; color: #f0f0f0; }
.chosen b { background: #000; }
.log-scroll { width: 10px; background: #787878; }
.log-scroll div { height: 44px; background: #4f4f4f; }

.footer { height: 28px; display: flex; }
.file { width: 1074px; background: linear-gradient(to right, #fff 31px, #f4f5f5 31px); display: flex; padding-left: 24px; line-height: 27px; font-size: 15px; }
.file-label { width: 402px; }
.file-name { font-size: 15.300px; line-height: 29px; }
.footer-end { flex: 1; background: #000; border-left: 1px solid #555; }
```
